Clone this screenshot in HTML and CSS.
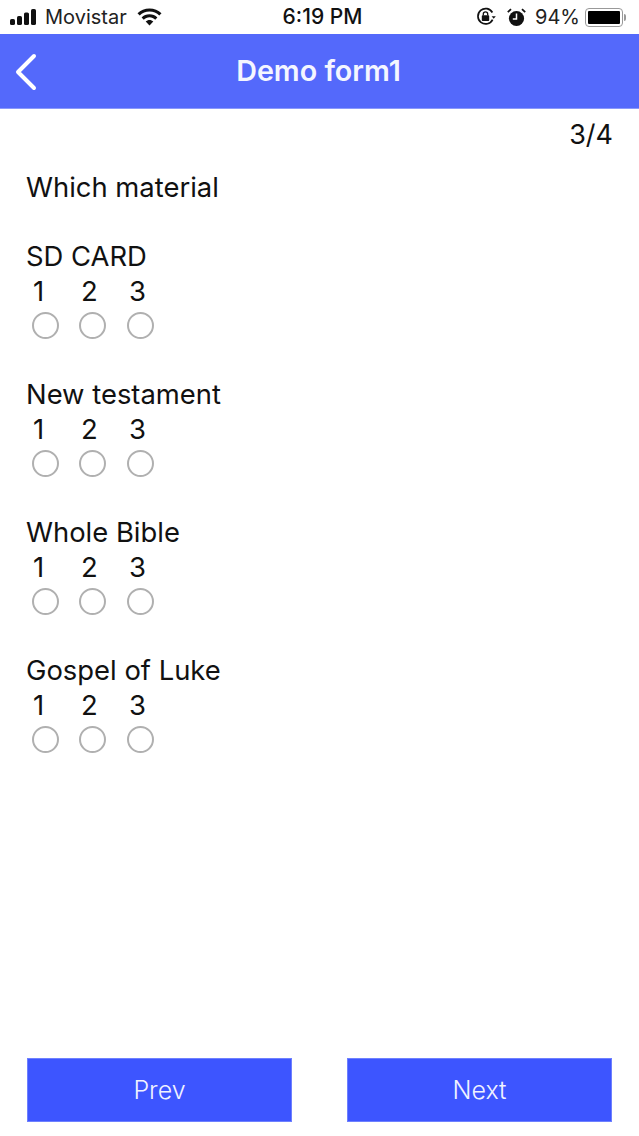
FILE: index.html
```html
<!DOCTYPE html>
<html lang="en">
<head>
<meta charset="utf-8">
<title>Demo form1</title>
<link rel="stylesheet" href="styles.css">
</head>
<body>
<div class="page">
  <div class="status">
    <div class="status-left">
      <svg class="signal" width="28" height="18" viewBox="0 0 28 18"><rect x="0" y="11" width="5" height="6" rx="1.6"/><rect x="7" y="8" width="5" height="9" rx="1.6"/><rect x="14" y="4.5" width="5" height="12.5" rx="1.6"/><rect x="21" y="1" width="5" height="16" rx="1.6"/></svg>
      <span class="carrier">Movistar</span>
      <svg class="wifi" width="25" height="18" viewBox="0 0 25 18"><path d="M12.5 0.5C7.8 0.5 3.6 2.3 0.5 5.3L2.7 7.6C5.3 5.1 8.7 3.6 12.5 3.6S19.7 5.1 22.3 7.6L24.5 5.3C21.4 2.3 17.2 0.5 12.5 0.5Z"/><path d="M12.5 6.2C9.4 6.2 6.6 7.4 4.6 9.4L6.8 11.7C8.3 10.2 10.3 9.3 12.5 9.3S16.7 10.2 18.2 11.7L20.4 9.4C18.4 7.4 15.6 6.2 12.5 6.2Z"/><path d="M12.5 11.9C11 11.9 9.7 12.5 8.7 13.4L12.5 17.5L16.3 13.4C15.3 12.5 14 11.9 12.5 11.9Z"/></svg>
    </div>
    <div class="clock">6:19 PM</div>
    <div class="status-right">
      <svg class="lock" width="20" height="20" viewBox="0 0 20 20"><path d="M16.6 12.6A7.7 7.7 0 1 1 16.4 5.5" fill="none" stroke="#111" stroke-width="1.7"/><path d="M15.6 9.2h4.2l-2.1 2.6z" fill="#111"/><rect x="5.8" y="8.2" width="7.4" height="5.8" rx="0.8" fill="#111"/><path d="M7.3 8.5V7a2.2 2.2 0 0 1 4.4 0v1.5" fill="none" stroke="#111" stroke-width="1.3"/></svg>
      <svg class="alarm" width="19" height="19" viewBox="0 0 19 19"><circle cx="9.5" cy="10.5" r="7.6" fill="#111"/><path d="M9.5 5.5V11H5.8" fill="none" stroke="#fff" stroke-width="1.5"/><path d="M0.8 4.2L4 1.2M18.2 4.2L15 1.2" stroke="#111" stroke-width="1.8" fill="none"/></svg>
      <span class="percent">94%</span>
      <div class="battery"><div class="battery-fill"></div></div>
      <div class="battery-cap"></div>
    </div>
  </div>
  <header class="nav">
    <svg class="back" width="26" height="38" viewBox="0 0 26 38"><path d="M21 3L5 19L21 35" fill="none" stroke="#fff" stroke-width="4" stroke-linecap="round" stroke-linejoin="round"/></svg>
    <h1 class="nav-title">Demo form1</h1>
  </header>
  <div class="counter">3/4</div>
  <main class="form">
    <h2 class="question">Which material</h2>
    <section class="group">
      <div class="label">SD CARD</div>
      <div class="options"><span>1</span><span>2</span><span>3</span></div>
      <div class="radios"><i class="radio"></i><i class="radio"></i><i class="radio"></i></div>
    </section>
    <section class="group">
      <div class="label">New testament</div>
      <div class="options"><span>1</span><span>2</span><span>3</span></div>
      <div class="radios"><i class="radio"></i><i class="radio"></i><i class="radio"></i></div>
    </section>
    <section class="group">
      <div class="label">Whole Bible</div>
      <div class="options"><span>1</span><span>2</span><span>3</span></div>
      <div class="radios"><i class="radio"></i><i class="radio"></i><i class="radio"></i></div>
    </section>
    <section class="group">
      <div class="label">Gospel of Luke</div>
      <div class="options"><span>1</span><span>2</span><span>3</span></div>
      <div class="radios"><i class="radio"></i><i class="radio"></i><i class="radio"></i></div>
    </section>
  </main>
  <footer class="footer">
    <button class="btn">Prev</button>
    <button class="btn">Next</button>
  </footer>
</div>
</body>
</html>
```

FILE: styles.css
```css
* { box-sizing: border-box; }
html, body { margin: 0; padding: 0; background: #fff; }
body { font-family: Inter, "Liberation Sans", sans-serif; color: #111; }
.page { width: 639px; height: 1136px; display: flex; flex-direction: column; overflow: hidden; }

.status { height: 34px; display: grid; grid-template-columns: 1fr auto 1fr; align-items: center; padding: 0 4px 0 10px; background: #fff; }
.status-left { display: flex; align-items: center; }
.signal { fill: #111; margin-right: 7px; }
.carrier { font-size: 20px; line-height: 34px; color: #222; width: 93px; }
.wifi { fill: #111; margin-left: -1px; }
.clock { font-size: 21px; font-weight: 500; line-height: 34px; color: #111; }
.status-right { display: flex; align-items: center; justify-content: flex-end; padding-right: 9px; }
.lock { margin-right: 11px; }
.alarm { margin-right: 9px; }
.percent { font-size: 20px; line-height: 34px; color: #222; margin-right: 5px; }
.battery { width: 38px; height: 19px; border: 1.5px solid #999; border-radius: 4px; padding: 2px; }
.battery-fill { width: 100%; height: 100%; background: #000; border-radius: 1px; }
.battery-cap { width: 2px; height: 7px; background: #999; margin-left: 1px; border-radius: 0 2px 2px 0; }

.nav { height: 75px; flex: none; background: #5469fb; display: flex; align-items: center; justify-content: center; position: relative; border-bottom: 1px solid #8a99fb; }
.back { position: absolute; left: 13px; top: 19px; }
.nav-title { margin: 0; font-size: 28.7px; font-weight: 600; color: #f4f6ff; line-height: 30px; padding-right: 2px; }

.counter { font-size: 27px; line-height: 30px; text-align: right; padding: 11px 26px 0 0; color: #111; }

.form { flex: 1; padding: 21px 0 0 26px; }
.question { margin: 0 0 37px; font-size: 27.4px; font-weight: 400; line-height: 32px; color: #111; }
.group { height: 138px; }
.label { font-size: 27.4px; line-height: 32px; height: 32px; color: #111; }
.options { display: flex; height: 38px; margin-bottom: 2px; align-items: center; font-size: 27.5px; line-height: 32px; padding-left: 7px; }
.options span { width: 48px; color: #111; }
.radios { display: flex; gap: 20.6px; padding-left: 5.5px; }
.radio { display: block; width: 27px; height: 27px; border: 2px solid #b0b0b0; border-radius: 50%; background: #fff; }

.footer { display: flex; justify-content: space-between; padding: 0 27px 14px; }
.btn { width: 265px; height: 64px; border: 1px solid #6e80ff; border-radius: 0; background: #3d55ff; color: #f0f2ff; font-family: inherit; font-size: 25px; font-weight: 350; padding: 0; }
```
